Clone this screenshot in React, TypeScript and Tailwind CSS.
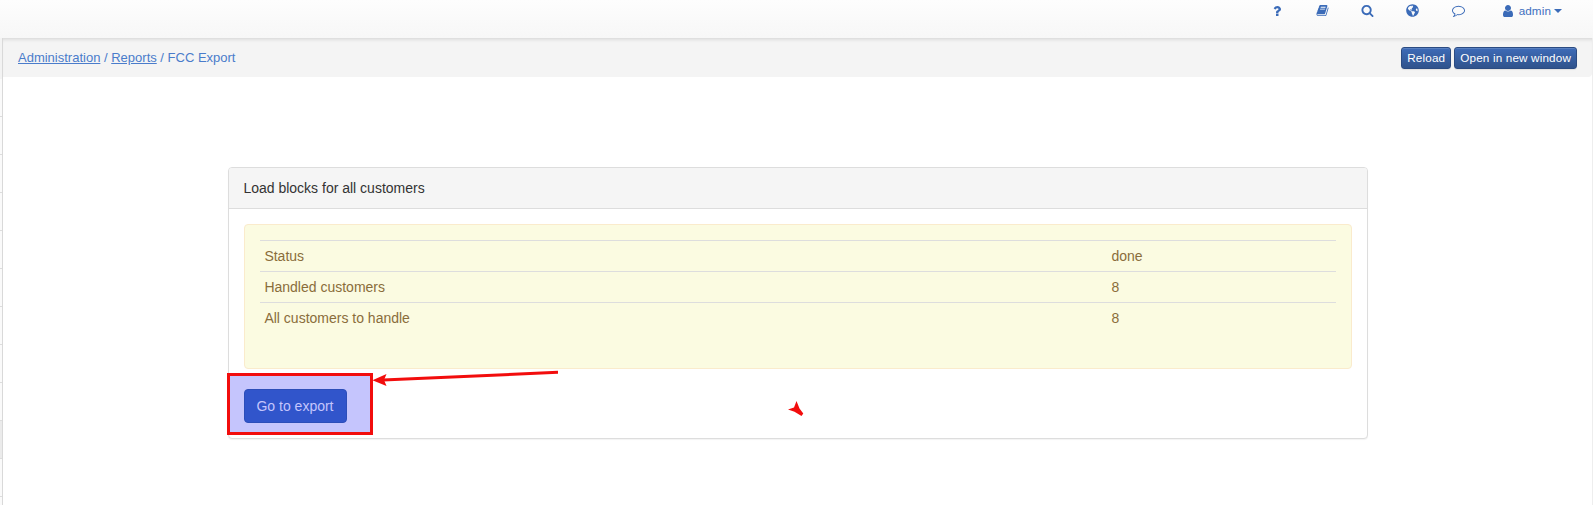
import React from "react";
import { FaGlobeAmericas } from "react-icons/fa";

const paths = {
  question:
    "M1088 1256v240q0 16-12 28t-28 12h-240q-16 0-28-12t-12-28v-240q0-16 12-28t28-12h240q16 0 28 12t12 28zm316-600q0 54-15.5 101t-35 76.5-55 59.5-57.5 43.5-61 35.5q-41 23-68.5 65t-27.5 67q0 17-12 32.5t-28 15.5h-240q-15 0-25.5-18.5t-10.5-37.5v-45q0-83 65-156.5t143-108.5q59-27 84-56t25-76q0-42-46.5-74t-107.5-32q-65 0-108 29-35 25-107 115-13 16-31 16-12 0-25-8l-164-125q-13-10-15.5-25t5.5-28q160-266 464-266 80 0 161 31t146 83 106 127.5 41 158.5z",
  book: "M1703 478q40 57 18 129l-275 906q-19 64-76.5 107.5t-122.5 43.5h-923q-77 0-148.5-53.5t-99.5-131.5q-24-67-2-127 0-4 3-27t4-37q1-8-3-21.5t-3-19.5q2-11 8-21t16.5-23.5 16.5-23.5q23-38 45-91.5t30-91.5q3-10 .5-30t-.5-28q3-11 17-28t17-23q21-36 42-92t25-90q1-9-2.5-32t.5-28q4-13 22-30.5t22-22.5q19-26 42.5-84.5t27.5-96.5q1-8-3-25.5t-2-26.5q2-8 9-18t18-23 17-21q8-12 16.5-30.5t15-35 16-36 19.5-32 26.5-23.5 36-11.5 47.5 5.5l-1 3q38-9 51-9h761q74 0 114 56t18 130l-274 906q-36 119-71.5 153.5t-128.5 34.5h-869q-27 0-38 15-11 16-1 43 24 70 144 70h923q29 0 56-15.5t35-41.5l300-987q7-22 5-57 38 15 59 43zm-1064 2q-4 13 2 22.5t20 9.5h608q13 0 25.5-9.5t16.5-22.5l21-64q4-13-2-22.5t-20-9.5h-608q-13 0-25.5 9.5t-16.5 22.5zm-83 256q-4 13 2 22.5t20 9.5h608q13 0 25.5-9.5t16.5-22.5l21-64q4-13-2-22.5t-20-9.5h-608q-13 0-25.5 9.5t-16.5 22.5z",
  search:
    "M1216 832q0-185-131.5-316.5t-316.5-131.5-316.5 131.5-131.5 316.5 131.5 316.5 316.5 131.5 316.5-131.5 131.5-316.5zm512 832q0 52-38 90t-90 38q-54 0-90-38l-343-342q-179 124-399 124-143 0-273.5-55.5t-225-150-150-225-55.5-273.5 55.5-273.5 150-225 225-150 273.5-55.5 273.5 55.5 225 150 150 225 55.5 273.5q0 220-124 399l343 343q37 37 37 90z",
  comment:
    "M896 384q-204 0-381.5 69.5t-282 187.5-104.5 255q0 112 71.5 213.5t201.5 175.5l87 50-27 96q-24 91-70 172 152-63 275-171l43-38 57 6q69 8 130 8 204 0 381.5-69.5t282-187.5 104.5-255-104.5-255-282-187.5-381.5-69.5zm896 512q0 174-120 321.5t-326 233-450 85.5q-70 0-145-8-198 175-460 242-49 14-114 22h-5q-15 0-27-10.5t-16-27.5v-1q-3-4-.5-12t2-10 4.5-9.5l6-9 7-8.5 8-9q7-8 31-34.5t34.5-38 31-39.5 32.5-51 27-59 26-76q-157-89-247.5-220t-90.5-281q0-130 71-248.5t191-204.5 286-136.5 348-50.5 348 50.5 286 136.5 191 204.5 71 248.5z",
  user: "M1536 1399q0 109-62.5 187t-150.5 78h-854q-88 0-150.5-78t-62.5-187q0-85 8.5-160.5t31.5-152 58.5-131 94-89 134.5-34.5q131 128 313 128t313-128q76 0 134.5 34.5t94 89 58.5 131 31.5 152 8.5 160.5zm-256-887q0 159-112.5 271.5t-271.5 112.5-271.5-112.5-112.5-271.5 112.5-271.5 271.5-112.5 271.5 112.5 112.5 271.5z",
};

function Icon({ name, className }: { name: keyof typeof paths; className: string }) {
  return (
    <svg viewBox="0 0 1792 1792" fill="currentColor" className={className}>
      <path d={paths[name]} />
    </svg>
  );
}

function TopBar() {
  return (
    <header className="flex h-[38px] items-start justify-end bg-linear-to-b from-[#fdfdfd] to-[#f7f7f7] pr-[31px] text-[#3b6bb8]">
      <nav className="flex h-[21px] items-center">
        <Icon name="question" className="mr-[32px] size-[14px]" />
        <Icon name="book" className="mr-8 size-[13px]" />
        <Icon name="search" className="mr-[32px] size-[13px]" />
        <FaGlobeAmericas className="mr-[33px] mb-px size-[13px]" />
        <Icon name="comment" className="mr-9 size-[13px]" />
        <Icon name="user" className="mr-1 size-[14px]" />
        <span className="text-[11.7px] tracking-[0.1px] text-[#3e6fc0]">admin</span>
        <span className="ml-[3px] border-x-4 border-t-4 border-x-transparent border-t-[#3b6bb8]" />
      </nav>
    </header>
  );
}

function SideRail() {
  return (
    <aside className="flex w-[3px] shrink-0 flex-col overflow-hidden border-r border-[#d9d9d9] bg-[#fafafa]">
      {Array.from({ length: 13 }, (_, i) => (
        <div
          key={i}
          className={
            i === 10
              ? "h-[38px] shrink-0 border-b border-[#dddddd] bg-[#ebebeb]"
              : i === 0
                ? "h-[41px] shrink-0 bg-[#f3f3f3]"
                : "h-[38px] shrink-0 border-b border-[#dddddd]"
          }
        />
      ))}
    </aside>
  );
}

function SmallButton({ children }: { children: React.ReactNode }) {
  return (
    <button className="h-[22px] rounded-[3px] border border-[#2b4b82] bg-linear-to-b from-[#3d6bb8] to-[#30538c] px-[5px] text-[11.7px] leading-[20px] tracking-[0.16px] text-white shadow-[inset_0_1px_0_rgba(255,255,255,0.15),0_1px_1px_rgba(0,0,0,0.08)]">
      {children}
    </button>
  );
}

function Breadcrumbs() {
  return (
    <div className="flex h-[39px] items-center justify-between rounded-br bg-[#f4f4f4] pr-[15px] pl-[15px] shadow-[inset_0_4px_4px_-3px_rgba(0,0,0,0.14)]">
      <div className="text-[13px] leading-5 text-[#4a7ccb]">
        <a className="underline">Administration</a> / <a className="underline">Reports</a> / FCC Export
      </div>
      <div className="flex gap-[3px]">
        <SmallButton>Reload</SmallButton>
        <SmallButton>Open in new window</SmallButton>
      </div>
    </div>
  );
}

const rows = [
  ["Status", "done"],
  ["Handled customers", "8"],
  ["All customers to handle", "8"],
];

function ExportPanel() {
  return (
    <section className="relative mt-[90px] ml-[225px] h-[272px] w-[1140px] rounded border border-[#dddddd] bg-white text-[14px] leading-5 shadow-[0_1px_1px_rgba(0,0,0,0.05)]">
      <div className="h-[41px] rounded-t-[3px] border-b border-[#dddddd] bg-[#f5f5f5] px-[14.4px] py-2.5 text-[#333333]">
        Load blocks for all customers
      </div>
      <div className="p-[15px]">
        <div className="h-[145px] rounded border border-[#faebcc] bg-[#fbfbe1] p-[15px] text-[#8a6d3b]">
          {rows.map(([label, value]) => (
            <div key={label} className="flex h-[31px] border-t border-[#dddddd] py-[5px] pl-[4.4px]">
              <span className="w-[847px]">{label}</span>
              <span>{value}</span>
            </div>
          ))}
        </div>
        <div className="mt-1 -ml-[17px] h-[62px] w-[146px] border-3 border-[#f20d0d] bg-[#c5c5fd] px-3.5 py-[13px]">
          <button className="h-[34px] w-[103px] rounded border border-[#2c4eb9] bg-[#3155cb] pr-px text-[#c5c5fd]">
            Go to export
          </button>
        </div>
      </div>
      <svg className="absolute top-[195px] left-[144px] h-[60px] w-[440px]" viewBox="373 363 440 60" fill="#f20d0d">
        <path d="M383 380 L558 372.3" stroke="#f20d0d" strokeWidth="3" />
        <path d="M372.5 380.3 L386.5 374 L384 380 L386.5 386 Z" />
        <path d="M788 409.5 L794 407.5 L796.5 401 L799.5 408.5 L803.3 413.5 L801.5 416 L794.5 411.8 Z" />
      </svg>
    </section>
  );
}

export default function App() {
  return (
    <div className="flex h-[505px] w-full flex-col overflow-hidden bg-white font-['Liberation_Sans',Arial,sans-serif]">
      <TopBar />
      <div className="flex min-h-0 flex-1">
        <SideRail />
        <main className="min-w-0 flex-1 border-r border-[#eeeeee]">
          <Breadcrumbs />
          <ExportPanel />
        </main>
      </div>
    </div>
  );
}
